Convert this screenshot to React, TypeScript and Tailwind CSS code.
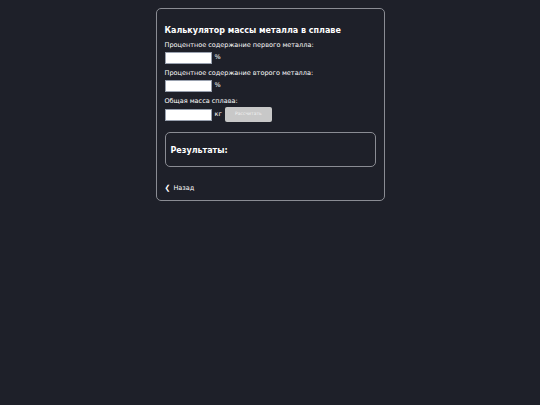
import React from "react";

const Field = ({ label, unit }: { label: string; unit: string }) => (
  <div className="mt-[5px]">
    <div className="text-[6.5px] leading-[8px] text-white">{label}</div>
    <div className="mt-[3px] flex items-center gap-[3px]">
      <input
        type="text"
        className="h-[12px] w-[47px] border border-gray-400 bg-white"
      />
      <span className="text-[6.5px] text-white">{unit}</span>
    </div>
  </div>
);

export default function App() {
  return (
    <div
      className="min-h-[405px] w-full bg-[#1e2029] pt-[8px]"
      style={{ fontFamily: '"DejaVu Sans", sans-serif' }}
    >
      <div className="mx-auto w-[229px] rounded-[5px] border border-[#8a8c93] px-[8px] pb-[8px] pt-[17px]">
        <h3 className="mb-[4px] text-[8px] font-bold leading-[10px] text-white">
          Калькулятор массы металла в сплаве
        </h3>
        <Field label="Процентное содержание первого металла:" unit="%" />
        <Field label="Процентное содержание второго металла:" unit="%" />
        <div className="mt-[5px]">
          <div className="text-[6.5px] leading-[8px] text-white">
            Общая масса сплава:
          </div>
          <div className="mt-[2px] flex items-center gap-[3px]">
            <input
              type="text"
              className="h-[12px] w-[47px] border border-gray-400 bg-white"
            />
            <span className="text-[6.5px] text-white">кг</span>
            <button className="h-[15px] w-[47px] rounded-[2px] bg-[#c8c8c8] text-[4.5px] text-[#f2f2f2]">
              Рассчитать
            </button>
          </div>
        </div>
        <div className="mt-[10px] h-[35px] rounded-[5px] border border-[#8a8c93] px-[5px] pt-[13px]">
          <h3 className="text-[8px] font-bold leading-[10px] text-white">
            Результаты:
          </h3>
        </div>
        <a className="mt-[16.5px] flex items-center gap-[3px] text-[6.5px] leading-[8px] text-white">
          <span className="text-[7px]">❮</span>
          <span>Назад</span>
        </a>
      </div>
    </div>
  );
}
